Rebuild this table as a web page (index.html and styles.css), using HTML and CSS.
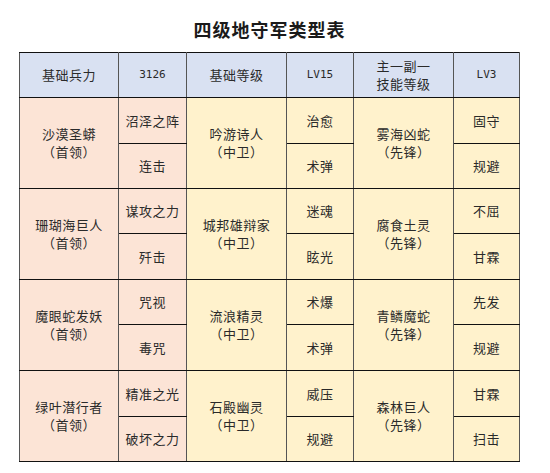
FILE: index.html
```html
<!DOCTYPE html>
<html lang="zh">
<head>
<meta charset="utf-8">
<link rel="stylesheet" href="styles.css">
</head>
<body>
<div class="page">
  <h1 class="title">四级地守军类型表</h1>
  <table class="grid">
    <colgroup>
      <col class="c1"><col class="c2"><col class="c3"><col class="c4"><col class="c5"><col class="c6">
    </colgroup>
    <tr class="head">
      <td>基础兵力</td><td class="num">3126</td><td>基础等级</td><td class="num">LV15</td><td>主一副一<br>技能等级</td><td class="num">LV3</td>
    </tr>
    <tr class="ra">
      <td rowspan="2" class="pink">沙漠圣蟒<br>（首领）</td><td class="pink">沼泽之阵</td>
      <td rowspan="2" class="cream">吟游诗人<br>（中卫）</td><td class="cream">治愈</td>
      <td rowspan="2" class="cream">雾海凶蛇<br>（先锋）</td><td class="cream">固守</td>
    </tr>
    <tr class="rb">
      <td class="pink">连击</td><td class="cream">术弹</td><td class="cream">规避</td>
    </tr>
    <tr class="rb">
      <td rowspan="2" class="pink">珊瑚海巨人<br>（首领）</td><td class="pink">谋攻之力</td>
      <td rowspan="2" class="cream">城邦雄辩家<br>（中卫）</td><td class="cream">迷魂</td>
      <td rowspan="2" class="cream">腐食土灵<br>（先锋）</td><td class="cream">不屈</td>
    </tr>
    <tr class="ra">
      <td class="pink">歼击</td><td class="cream">眩光</td><td class="cream">甘霖</td>
    </tr>
    <tr class="rb">
      <td rowspan="2" class="pink">魔眼蛇发妖<br>（首领）</td><td class="pink">咒视</td>
      <td rowspan="2" class="cream">流浪精灵<br>（中卫）</td><td class="cream">术爆</td>
      <td rowspan="2" class="cream">青鳞魔蛇<br>（先锋）</td><td class="cream">先发</td>
    </tr>
    <tr class="ra">
      <td class="pink">毒咒</td><td class="cream">术弹</td><td class="cream">规避</td>
    </tr>
    <tr class="ra">
      <td rowspan="2" class="pink">绿叶潜行者<br>（首领）</td><td class="pink">精准之光</td>
      <td rowspan="2" class="cream">石殿幽灵<br>（中卫）</td><td class="cream">威压</td>
      <td rowspan="2" class="cream">森林巨人<br>（先锋）</td><td class="cream">甘霖</td>
    </tr>
    <tr class="rb">
      <td class="pink">破坏之力</td><td class="cream">规避</td><td class="cream">扫击</td>
    </tr>
  </table>
</div>
</body>
</html>
```
FILE: styles.css
```css
html, body {
  margin: 0;
  padding: 0;
  background: #ffffff;
}
.page {
  width: 501px;
  margin-left: 19px;
  font-family: "Noto Sans CJK SC", "Noto Sans", sans-serif;
  color: #2a2a2a;
}
.title {
  margin: 0;
  height: 52px;
  box-sizing: border-box;
  padding-top: 17px;
  text-align: center;
  font-size: 18px;
  line-height: 24px;
  font-weight: 700;
  letter-spacing: 1px;
  color: #1a1a1a;
}
.grid {
  width: 501px;
  table-layout: fixed;
  border-collapse: collapse;
  font-size: 13px;
  line-height: 18px;
}
.c1 { width: 99px; }
.c2 { width: 68px; }
.c3 { width: 100px; }
.c4 { width: 67px; }
.c5 { width: 100px; }
.c6 { width: 66px; }
.grid td {
  padding: 0;
  text-align: center;
  vertical-align: middle;
  border-top: 1px solid #111;
  border-bottom: 1px solid #111;
  border-left: 1px solid #555;
  border-right: 1px solid #555;
  letter-spacing: 0.5px;
}
.head td {
  background: #d9e1f2;
  height: 44px;
}
.head .num {
  font-family: "DejaVu Sans Mono", monospace;
  font-size: 11px;
  letter-spacing: 0;
}
.ra td { height: 45px; }
.rb td { height: 44px; }
.pink { background: #fce4d6; }
.cream { background: #fff2cc; }
```
